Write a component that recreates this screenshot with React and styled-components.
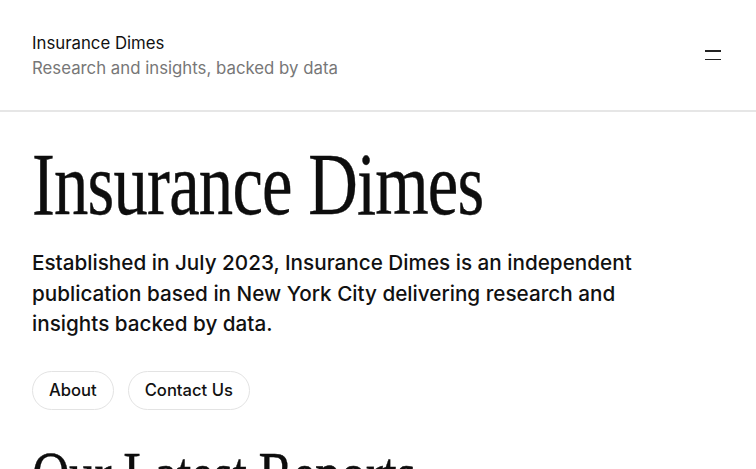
import React from "react";
import styled, { createGlobalStyle } from "styled-components";

const GlobalStyle = createGlobalStyle`
  html, body {
    margin: 0;
    padding: 0;
    background: #fff;
    overflow: hidden;
  }
  body {
    font-family: Inter, "Noto Sans", sans-serif;
    color: #111;
  }
`;

const Header = styled.header`
  height: 112px;
  box-sizing: border-box;
  border-bottom: 2px solid #e6e6e6;
  display: flex;
  align-items: center;
  justify-content: space-between;
  padding: 0 35px 0 32px;
`;

const Brand = styled.div`
  display: flex;
  flex-direction: column;
  gap: 4px;
  margin-top: 1px;
`;

const BrandName = styled.div`
  font-size: 16.8px;
  line-height: 21px;
  color: #111;
`;

const Tagline = styled.div`
  font-size: 16.8px;
  line-height: 21px;
  color: #777;
`;

const MenuButton = styled.button`
  border: 0;
  background: none;
  padding: 0;
  width: 16px;
  height: 10px;
  display: flex;
  flex-direction: column;
  justify-content: space-between;
  cursor: pointer;
`;

const MenuLine = styled.span`
  display: block;
  height: 1.5px;
  width: 100%;
  background: #222;
`;

const Main = styled.main`
  padding: 29px 32px 0;
`;

const Title = styled.h1`
  margin: 0;
  font-family: "Liberation Serif", "Times New Roman", serif;
  font-weight: 400;
  font-size: ${(p) => p.size}px;
  line-height: 1;
  letter-spacing: -1px;
  color: #0d0d0d;
  white-space: nowrap;
  transform: scaleX(0.78);
  transform-origin: left center;
  -webkit-text-stroke: 0.4px #0d0d0d;
`;

const Intro = styled.p`
  margin: 19px 0 0;
  max-width: 640px;
  font-size: 20.7px;
  font-weight: 500;
  line-height: 30.5px;
  color: #111;
`;

const Actions = styled.div`
  display: flex;
  gap: 14px;
  margin-top: 31px;
`;

const Pill = styled.a`
  display: inline-flex;
  align-items: center;
  height: 39px;
  box-sizing: border-box;
  padding: 0 16px;
  border: 1px solid #e3e3e3;
  border-radius: 20px;
  font-size: 16.6px;
  font-weight: 500;
  color: #111;
  text-decoration: none;
`;

const Section = styled.section`
  margin-top: 32px;
`;

export default function App() {
  return (
    <>
      <GlobalStyle />
      <Header>
        <Brand>
          <BrandName>Insurance Dimes</BrandName>
          <Tagline>Research and insights, backed by data</Tagline>
        </Brand>
        <MenuButton aria-label="Menu">
          <MenuLine />
          <MenuLine />
        </MenuButton>
      </Header>
      <Main>
        <Title size={88}>Insurance Dimes</Title>
        <Intro>
          Established in July 2023, Insurance Dimes is an independent
          publication based in New York City delivering research and insights
          backed by data.
        </Intro>
        <Actions>
          <Pill href="#">About</Pill>
          <Pill href="#">Contact Us</Pill>
        </Actions>
        <Section>
          <Title size={67}>Our Latest Reports</Title>
        </Section>
      </Main>
    </>
  );
}
